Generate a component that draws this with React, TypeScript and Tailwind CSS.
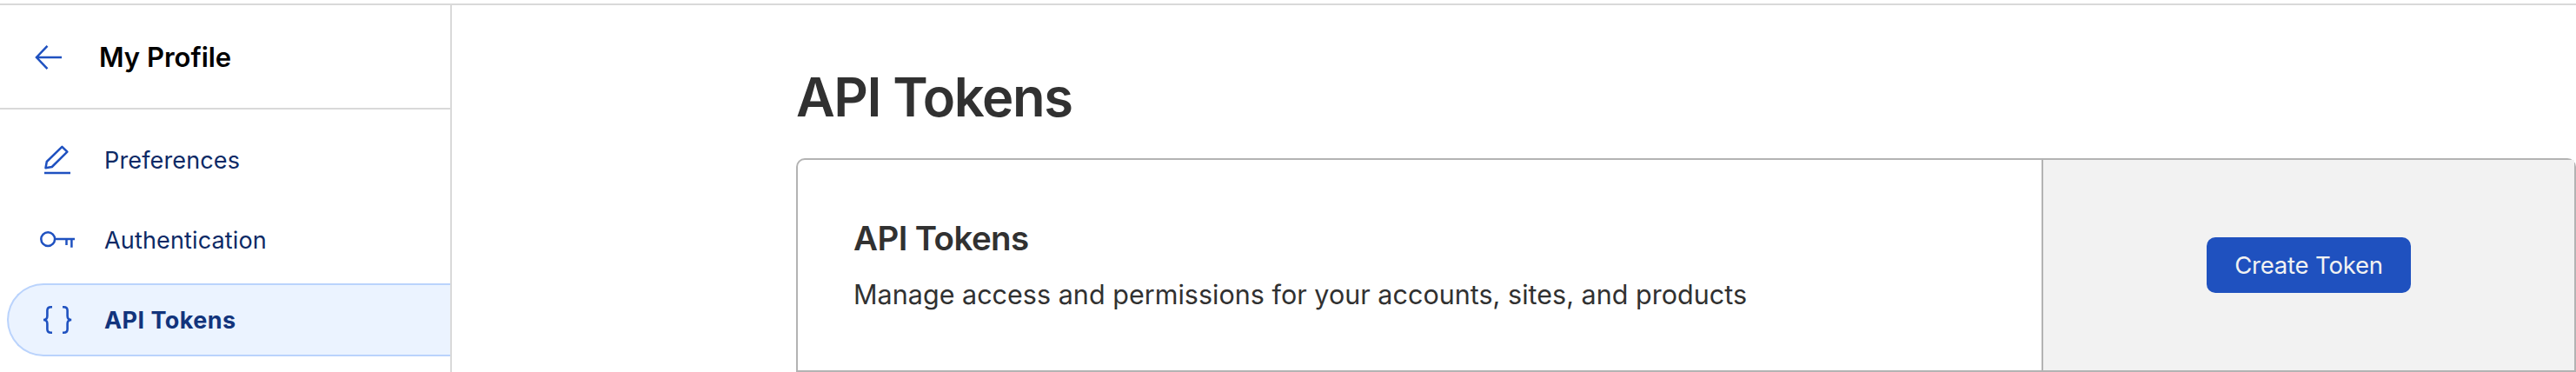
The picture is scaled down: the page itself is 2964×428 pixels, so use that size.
import { ReactNode } from "react"
import clsx from "clsx"

interface NavItem {
  label: string
  icon: ReactNode
  active?: boolean
}

const ArrowIcon = () => (
  <svg width="32" height="32" viewBox="0 0 32 32" fill="none" stroke="currentColor" strokeWidth="2.5">
    <path d="M31 16H2M14.5 2.8L2 16L14.5 29.2" />
  </svg>
)

const PencilIcon = () => (
  <svg width="48" height="48" viewBox="0 0 48 48" fill="none" stroke="currentColor" strokeWidth="2.5">
    <path d="M31.4 8.8L37.4 14.7L19.8 32L12.5 33.3L13.8 26Z" strokeLinejoin="round" />
    <path d="M11 39H41" />
  </svg>
)

const KeyIcon = () => (
  <svg width="48" height="48" viewBox="0 0 48 48" fill="none" stroke="currentColor" strokeWidth="2.5">
    <circle cx="15.2" cy="23.1" r="7.9" />
    <path d="M23 23.1H46M36.5 23V30M42.4 23V32.8" />
  </svg>
)

const BracesIcon = () => (
  <svg width="48" height="48" viewBox="0 0 48 48" fill="none" stroke="currentColor" strokeWidth="2.6">
    <path d="M20 9.2H18.7C15.7 9.2 14.4 10.7 14.4 13.2V19.5C14.4 22 13 24 10 24C13 24 14.4 26 14.4 28.5V34.8C14.4 37.3 15.7 38.8 18.7 38.8H20" />
    <path d="M32 9.2H33.3C36.3 9.2 37.6 10.7 37.6 13.2V19.5C37.6 22 39 24 42.2 24C39 24 37.6 26 37.6 28.5V34.8C37.6 37.3 36.3 38.8 33.3 38.8H32" />
  </svg>
)

const items: NavItem[] = [
  { label: "Preferences", icon: <PencilIcon /> },
  { label: "Authentication", icon: <KeyIcon /> },
  { label: "API Tokens", icon: <BracesIcon />, active: true },
]

const SidebarItem = ({ label, icon, active }: NavItem) => (
  <a
    className={clsx(
      "flex items-center h-[84px] ml-2 pl-[30px] rounded-l-full border-2 border-r-0",
      active
        ? "bg-[#ebf3ff] border-[#bad3fc] text-[#12347c] font-bold tracking-[0.45px]"
        : "border-transparent text-[#0c2a66] tracking-[0.15px]"
    )}
  >
    <span className="text-[#1f51c0]">{icon}</span>
    <span className="ml-[32px] pt-0.5 text-[27px] leading-9">{label}</span>
  </a>
)

const Sidebar = () => (
  <aside className="w-[520px] shrink-0 border-r-2 border-[#d9d9d9]">
    <div className="flex items-center h-[120px] border-b-2 border-[#d9d9d9] pt-0.5 pl-10 text-[#1f51c0]">
      <ArrowIcon />
      <span className="ml-[42px] text-[31px] leading-10 font-semibold text-black">My Profile</span>
    </div>
    <nav className="flex flex-col gap-2 pt-4">
      {items.map((item) => (
        <SidebarItem key={item.label} {...item} />
      ))}
    </nav>
  </aside>
)

export default function App() {
  return (
    <div className="flex flex-col h-[428px] overflow-hidden bg-white pt-1 font-['Inter',sans-serif]">
      <div className="flex flex-1 border-t-2 border-[#d9d9d9]">
        <Sidebar />
        <main className="flex-1 pl-[396px] text-[#313131]">
          <h1 className="mt-[66px] text-[61.5px] leading-[80px] tracking-[-1.4px] font-semibold">API Tokens</h1>
          <section className="flex mt-[30px] h-[246px] border-2 border-[#b3b3b3] rounded-t-[10px]">
            <div className="flex-1 pl-16 pt-[66px]">
              <h2 className="text-[38.5px] leading-[48px] tracking-[-0.6px] font-semibold">API Tokens</h2>
              <p className="mt-[21px] text-[30.5px] leading-[40px] tracking-[0.02px]">
                Manage access and permissions for your accounts, sites, and products
              </p>
            </div>
            <div className="flex items-center justify-center w-[613px] border-l-2 border-[#b3b3b3] bg-[#f2f2f2]">
              <button className="w-[235px] h-16 pt-0.5 rounded-[10px] bg-[#1f51bf] text-[27.5px] tracking-[-0.2px] text-[#f2f2f2]">
                Create Token
              </button>
            </div>
          </section>
        </main>
      </div>
    </div>
  )
}
